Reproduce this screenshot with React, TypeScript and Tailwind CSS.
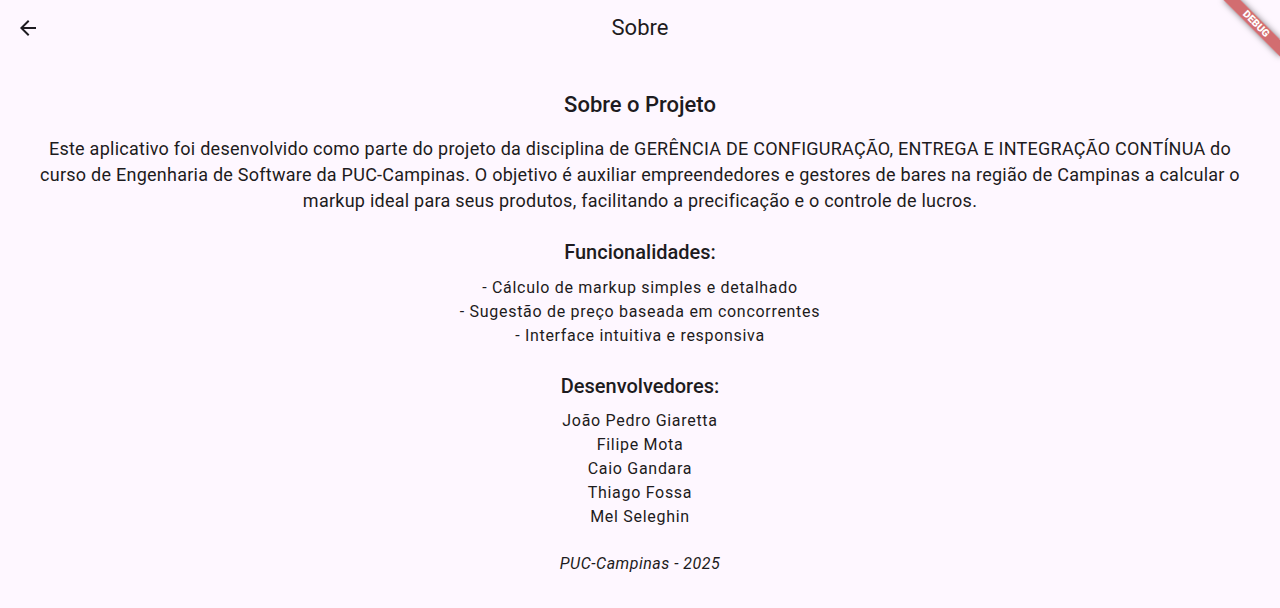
import React from 'react';

const features = [
  '- Cálculo de markup simples e detalhado',
  '- Sugestão de preço baseada em concorrentes',
  '- Interface intuitiva e responsiva',
];

const developers = ['João Pedro Giaretta', 'Filipe Mota', 'Caio Gandara', 'Thiago Fossa', 'Mel Seleghin'];

function DebugBanner() {
  return (
    <div className="pointer-events-none absolute right-[-16px] top-[18px] flex h-[12px] w-[80px] rotate-45 items-center justify-center bg-[#b71c1c]/[0.63] shadow-[0_0_6px_rgba(0,0,0,0.5)]">
      <span className="text-[10.2px] font-black leading-none tracking-normal text-white">DEBUG</span>
    </div>
  );
}

export default function App() {
  return (
    <div
      className="relative h-[608px] w-full overflow-hidden bg-[#fef7ff] text-[#1d1b20]"
      style={{ fontFamily: 'Roboto, "Liberation Sans", sans-serif' }}
    >
      {/* app bar */}
      <header className="relative flex h-[56px] items-center justify-center px-4">
        <button className="absolute left-[16px] top-[16px] h-6 w-6 text-[#1d1b20]">
          <svg viewBox="0 0 24 24" width="24" height="24" fill="currentColor">
            <path d="M20 11H7.83l5.59-5.59L12 4l-8 8 8 8 1.41-1.41L7.83 13H20v-2z" />
          </svg>
        </button>
        <h1 className="text-[22px] leading-[28px] font-normal">Sobre</h1>
      </header>

      <main className="flex flex-col items-center px-[36px] text-center">
        <h2 className="mt-[35px] text-[22px] leading-[28px] font-medium">Sobre o Projeto</h2>
        <p className="mt-[17px] text-[18px] leading-[26px] tracking-[0.25px]">
          Este aplicativo foi desenvolvido como parte do projeto da disciplina de GERÊNCIA DE CONFIGURAÇÃO, ENTREGA E
          INTEGRAÇÃO CONTÍNUA do curso de Engenharia de Software da PUC-Campinas. O objetivo é auxiliar empreendedores e
          gestores de bares na região de Campinas a calcular o markup ideal para seus produtos, facilitando a
          precificação e o controle de lucros.
        </p>

        <h3 className="mt-[26px] text-[20px] leading-[24px] font-medium">Funcionalidades:</h3>
        <ul className="mt-[12px] text-[16px] leading-[24px] tracking-[0.7px]">
          {features.map((f) => (
            <li key={f}>{f}</li>
          ))}
        </ul>

        <h3 className="mt-[26px] text-[20px] leading-[24px] font-medium">Desenvolvedores:</h3>
        <ul className="mt-[11px] text-[16px] leading-[24px] tracking-[0.7px]">
          {developers.map((d) => (
            <li key={d}>{d}</li>
          ))}
        </ul>

        <p className="mt-[23px] text-[16px] leading-[24px] tracking-[0.5px] italic">PUC-Campinas - 2025</p>
      </main>

      <DebugBanner />
    </div>
  );
}
